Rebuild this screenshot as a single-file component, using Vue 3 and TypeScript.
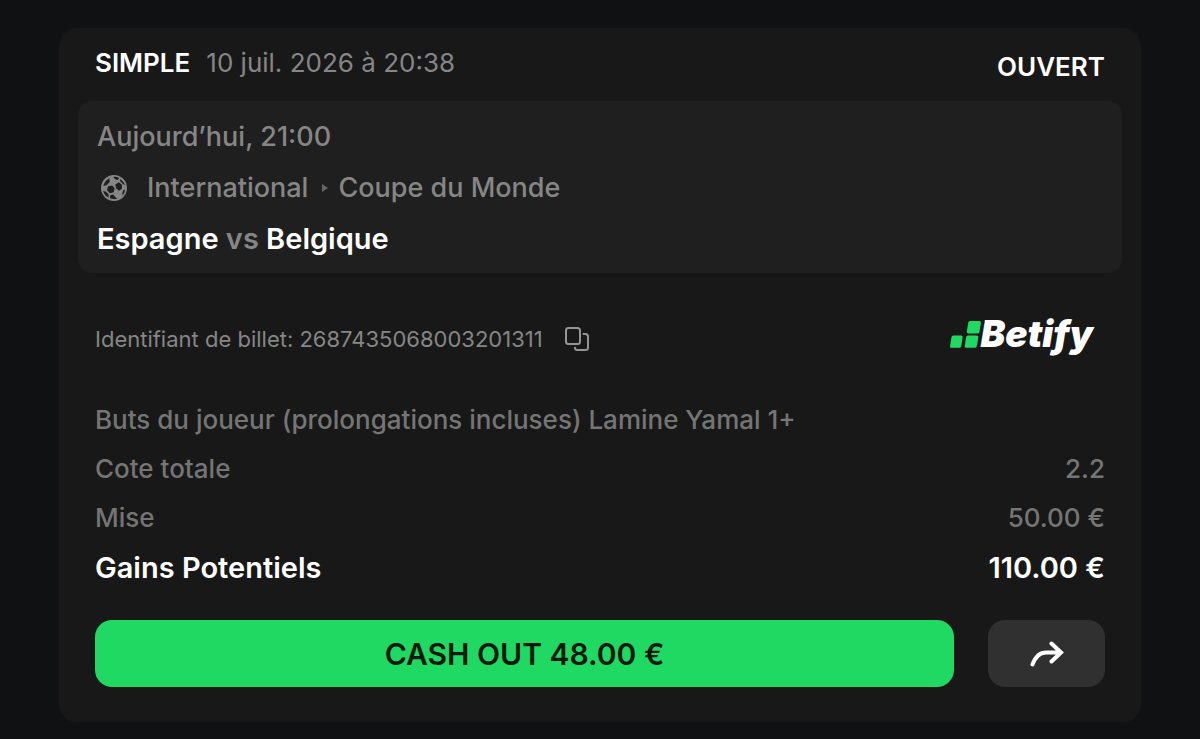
<script setup lang="ts">
interface Row {
  label: string
  value: string
}

const ticketId = '2687435068003201311'

const rows: Row[] = [
  { label: 'Cote totale', value: '2.2' },
  { label: 'Mise', value: '50.00 €' },
]

function copyId(): void {
  void navigator.clipboard?.writeText(ticketId)
}
</script>

<template>
  <main class="page">
    <article class="card">
      <header class="head">
        <div class="title">
          <h1 class="kind">SIMPLE</h1>
          <time class="date" datetime="2026-07-10T20:38">10 juil. 2026 à 20:38</time>
        </div>
        <span class="status">OUVERT</span>
      </header>

      <section class="event">
        <time class="when" datetime="2026-07-10T21:00">Aujourd’hui, 21:00</time>
        <div class="league">
          <svg class="ball" viewBox="0 0 26 26" aria-hidden="true">
            <circle cx="13" cy="13" r="13" fill="currentColor" />
            <g fill="#1f1f1f">
              <path d="M7.200 11.200 11.200 10.400 13.600 13.300 12.600 17.200 8.700 18.300 6 15Z" />
              <path d="M14.400 9.400 17.700 7.200 20.800 9.600 21 13.400 18.200 15.800 15.100 13.600Z" />
              <path d="M8.300 3.300 8.700 6.700 5.900 9.900 2.300 10.900Q3.600 5.800 8.300 3.300Z" />
              <path d="M12.200 1.900Q15.500 1.500 18.200 3L16.800 4.900 14.200 4.200Z" />
              <path d="M19.200 3.900Q23 6.400 24 10.200L22 9 19 6.100Z" />
              <path d="M2.100 15.900 5.100 16.800 7.700 19.700 7.400 22.500Q3.300 20.200 2.100 15.900Z" />
              <path d="M9.200 20.200 12.300 19.400 14.200 21.900 16.200 23.700Q12.300 24.700 9 23.300Z" />
              <path d="M24.200 14.600Q23.700 18 21.600 20.400L21.300 17.900 22.400 15.300Z" />
            </g>
          </svg>
          <span>International</span>
          <svg class="sep" viewBox="0 0 6 8" aria-hidden="true"><path d="M0 0 6 4 0 8Z" fill="currentColor" /></svg>
          <span>Coupe du Monde</span>
        </div>
        <h2 class="teams">Espagne <span class="vs">vs</span> Belgique</h2>
      </section>

      <div class="ticket">
        <p class="ident">
          <span>Identifiant de billet: {{ ticketId }}</span>
          <button class="copy" type="button" aria-label="Copier l’identifiant" @click="copyId">
            <svg viewBox="0 0 24 24" aria-hidden="true">
              <g fill="none" stroke="currentColor" stroke-width="2" stroke-linecap="round">
                <rect x="1" y="1" width="14" height="16" rx="2.5" />
                <path d="M18.500 7H20.500Q23 7 23 9.500V20.500Q23 23 20.500 23H12.500Q10 23 10 20.800" />
              </g>
            </svg>
          </button>
        </p>
        <div class="brand">
          <svg class="blocks" viewBox="0 0 30 27" aria-hidden="true">
            <g fill="#1fd963">
              <path d="M20 0H29.200Q31.200 0 30.900 2L29.400 11Q29.100 12.600 27.300 12.600H18.500Q16.500 12.600 16.800 10.600L18.300 1.600Q18.600 0 20 0Z" />
              <path d="M3.300 14.400H11.200Q13 14.400 12.700 16.100L11.200 25.200Q10.900 26.800 9.200 26.800H1.300Q-.3 26.800 0 25.200L1.500 16Q1.800 14.400 3.300 14.400Z" />
              <path d="M17.800 14.400H26.900Q28.700 14.400 28.400 16.100L26.800 25.200Q26.500 26.800 24.800 26.800H16.100Q14.400 26.800 14.700 25.200L16.100 16Q16.400 14.400 17.800 14.400Z" />
            </g>
          </svg>
          <span class="name">Betify</span>
        </div>
      </div>

      <p class="market">Buts du joueur (prolongations incluses) Lamine Yamal 1+</p>
      <dl class="rows">
        <div v-for="row in rows" :key="row.label" class="row">
          <dt>{{ row.label }}</dt>
          <dd>{{ row.value }}</dd>
        </div>
        <div class="row total">
          <dt>Gains Potentiels</dt>
          <dd>110.00 €</dd>
        </div>
      </dl>

      <footer class="actions">
        <button class="cashout" type="button">CASH OUT 48.00 €</button>
        <button class="share" type="button" aria-label="Partager">
          <svg viewBox="0 0 34 26" aria-hidden="true">
            <path d="M2.500 23.500C5.500 15.500 9.500 11.500 16 11.500H30M21.500 2.500 31 11.500 21.500 20.500" fill="none" stroke="currentColor" stroke-width="4" stroke-linecap="round" stroke-linejoin="miter" />
          </svg>
        </button>
      </footer>
    </article>
  </main>
</template>

<style>
body {
  background: #101113;
}
</style>

<style scoped>
.page {
  padding: 28px 59px 17px;
  font-family: Inter, "Liberation Sans", sans-serif;
  font-size: 26px;
  line-height: 32px;
  color: #fff;
}

.card {
  padding: 19px 19px 35px;
  border-radius: 18px;
  background: #181818;
}

h1,
h2,
p,
dl,
dd {
  margin: 0;
  font-size: inherit;
  font-weight: inherit;
}

button {
  border: 0;
  padding: 0;
  font: inherit;
  cursor: pointer;
}

.head,
.ticket,
.rows,
.market,
.actions {
  margin-left: 17px;
  margin-right: 17px;
}

.head {
  display: flex;
  justify-content: space-between;
  align-items: flex-end;
  height: 36px;
}

.title {
  display: flex;
  align-self: flex-start;
  gap: 16px;
}

.kind,
.status {
  font-weight: 600;
}

.date {
  color: #868686;
}

.event {
  display: flex;
  flex-direction: column;
  gap: 19px;
  margin-top: 18px;
  padding: 20px 19px 18px;
  border-radius: 14px;
  background: #1f1f1f;
  color: #868686;
  font-size: 27px;
  font-weight: 500;
}

.league {
  display: flex;
  align-items: center;
}

.ball {
  width: 26px;
  height: 26px;
  margin: 0 20px 0 4px;
}

.sep {
  width: 6px;
  height: 8px;
  margin: 0 10px 0 14px;
  color: #666;
}

.teams {
  color: #fff;
  font-size: 29px;
  font-weight: 600;
}

.vs {
  color: #868686;
}

.ticket {
  display: flex;
  justify-content: space-between;
  align-items: center;
  height: 42px;
  margin-top: 45px;
}

.ident {
  display: flex;
  align-items: center;
  gap: 22px;
  color: #868686;
  font-size: 22px;
}

.copy {
  display: flex;
  background: none;
  color: #949494;
}

.copy svg {
  width: 24px;
  height: 24px;
}

.brand {
  display: flex;
  align-items: center;
  margin-right: 12px;
  padding-bottom: 10px;
}

.blocks {
  width: 30px;
  height: 27px;
  overflow: visible;
}

.name {
  font-size: 37px;
  font-style: italic;
  font-weight: 900;
  line-height: 36px;
}

.market {
  margin-top: 44px;
  color: #757575;
  font-weight: 500;
}

.rows {
  display: flex;
  flex-direction: column;
  gap: 17px;
  margin-top: 17px;
}

.row {
  display: flex;
  justify-content: space-between;
  color: #757575;
  font-weight: 500;
}

.total {
  color: #fff;
  font-size: 29px;
  font-weight: 600;
  line-height: 34px;
}

.actions {
  display: flex;
  gap: 34px;
  margin-top: 35px;
}

.cashout,
.share {
  height: 67px;
  border-radius: 17px;
}

.cashout {
  flex: 1;
  background: #1fd963;
  color: #07190d;
  font-size: 30px;
  font-weight: 600;
}

.share {
  display: flex;
  align-items: center;
  justify-content: center;
  width: 117px;
  background: #303030;
  color: #fff;
}

.share svg {
  width: 34px;
  height: 26px;
}
</style>
